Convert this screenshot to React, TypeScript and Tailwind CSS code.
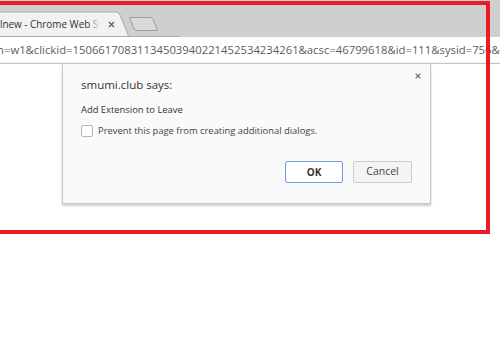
import { X } from 'lucide-react'

const font = { fontFamily: '"Open Sans", "Noto Sans", sans-serif' }

function TabStrip() {
  return (
    <div className="relative h-[37px] shrink-0 overflow-hidden bg-[#cfcfcf]">
      <svg className="absolute left-0 top-0" width="180" height="37" viewBox="0 0 180 37">
        <path d="M-10 37 L-10 12 L116 12 Q119 12 120 15 L129 37 Z" fill="#f2f2f2" stroke="#a9a9a9" strokeWidth="1" />
        <path d="M129.5 17.5 L150 17.5 Q152 17.5 153 19 L157.5 30.5 L137 30.5 Q135 30.5 134 29 Z" fill="#d9d9d9" stroke="#9c9c9c" strokeWidth="1" />
        <line x1="0" y1="36.5" x2="180" y2="36.5" stroke="#a9a9a9" />
      </svg>
      <div className="absolute left-0 top-[15px] flex h-[18px] w-[100px] items-center overflow-hidden">
        <span className="whitespace-nowrap text-[9.9px] text-[#333]" style={font}>
          lnew - Chrome Web Store
        </span>
        <div className="absolute right-0 top-0 h-full w-[12px] bg-gradient-to-r from-transparent to-[#f2f2f2]" />
      </div>
      <X className="absolute left-[107px] top-[20px] text-[#555]" size={9} strokeWidth={3} />
    </div>
  )
}

function Toolbar() {
  return (
    <div className="h-[27px] shrink-0 border-b border-[#c4c4c4] bg-[#f2f2f2] pb-[1px]">
      <div className="flex h-full items-center overflow-hidden whitespace-nowrap bg-white text-[11.3px] text-[#5c5c5c]" style={font}>
        <span className="ml-[-3px] pt-[2px]">
          n=w1&amp;clickid=15066170831134503940221452534234261&amp;acsc=46799618&amp;id=111&amp;sysid=756&amp;
        </span>
      </div>
    </div>
  )
}

function Dialog() {
  return (
    <div
      className="relative ml-[62px] h-[140px] w-[369px] border border-t-0 border-[#c6c6c6] bg-[#fafafa] pt-[13px] shadow-[0_2px_2px_rgba(0,0,0,0.2)]"
      style={font}
    >
      <X className="absolute right-[8px] top-[8px] text-[#777]" size={8} strokeWidth={3.5} />
      <div className="pl-[18px] text-[11.5px] leading-[16px] text-[#333]">smumi.club says:</div>
      <div className="mt-[10px] pl-[18px] text-[9.4px] leading-[14px] text-[#333]">Add Extension to Leave</div>
      <label className="mt-[7px] flex items-center gap-[5px] pl-[18px] text-[9.4px] leading-[14px] text-[#444]">
        <span className="h-[12px] w-[12px] rounded-[2px] border border-[#b5b5b5] bg-white" />
        Prevent this page from creating additional dialogs.
      </label>
      <div className="mt-[23px] flex justify-end gap-[10px] pr-[18px]">
        <button className="h-[22px] w-[58px] rounded-[2px] border border-[#6d9be6] bg-white text-[10px] font-bold text-[#333]">
          OK
        </button>
        <button className="h-[22px] w-[59px] rounded-[2px] border border-[#cdcdcd] bg-[#f4f4f4] text-[10.5px] text-[#444]">
          Cancel
        </button>
      </div>
    </div>
  )
}

export default function App() {
  return (
    <div className="relative flex h-[350px] w-[500px] flex-col overflow-hidden bg-white">
      <TabStrip />
      <Toolbar />
      <Dialog />
      <div className="pointer-events-none absolute left-[-10px] top-[1px] h-[233px] w-[500px] border-[4px] border-[#ec1c24]" />
    </div>
  )
}
